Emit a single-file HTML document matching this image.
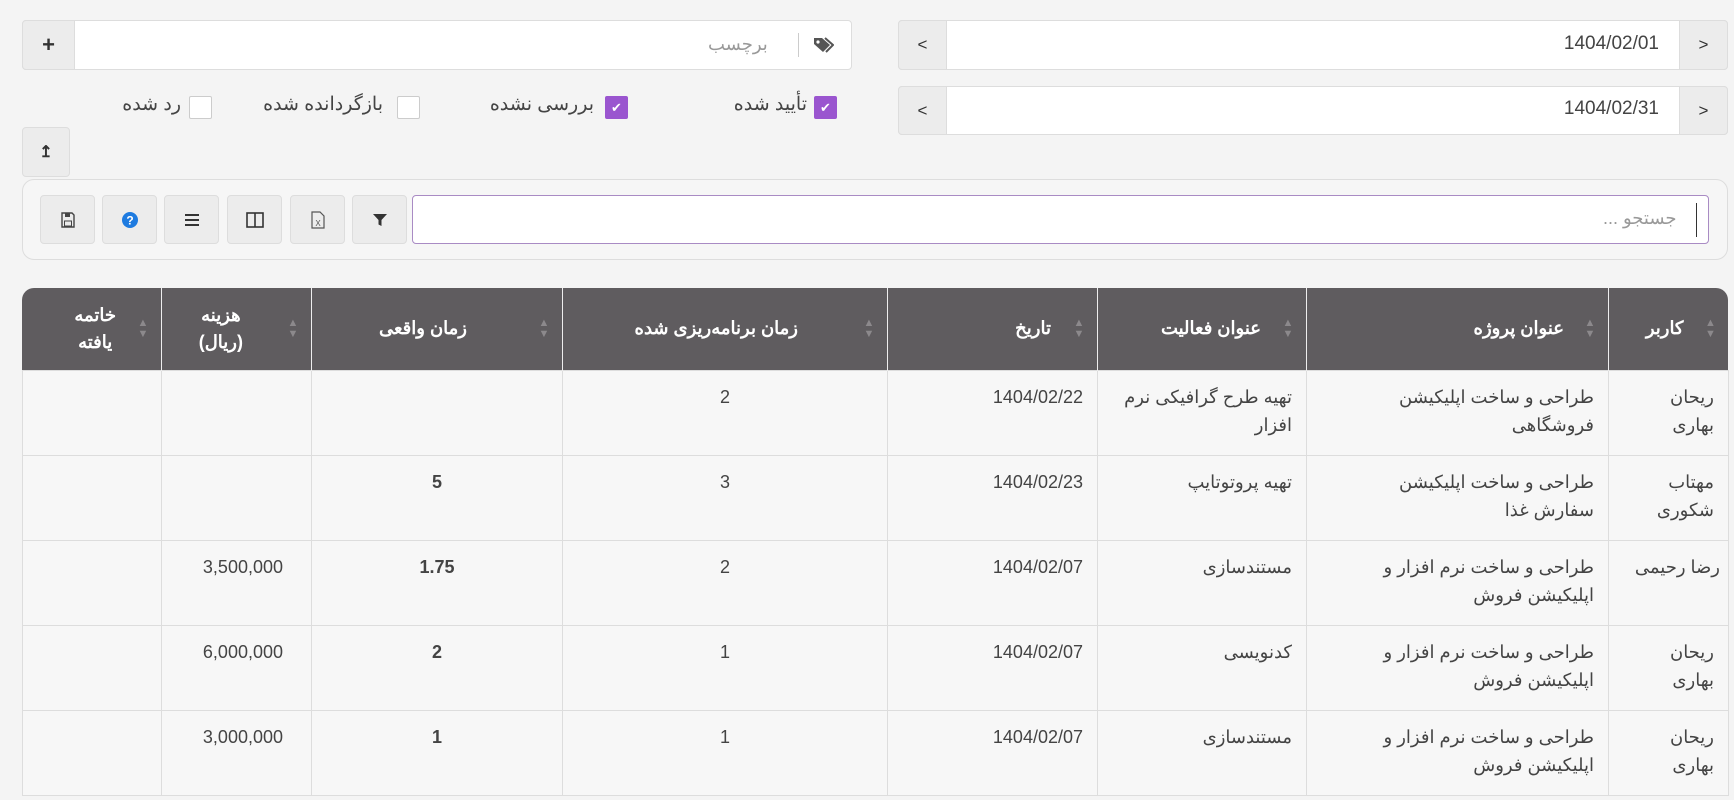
<!DOCTYPE html>
<html><head><meta charset="utf-8"><style>
*{box-sizing:border-box;margin:0;padding:0}
body{width:1734px;height:800px;overflow:hidden;background:#f4f4f4;font-family:"Liberation Sans","Noto Sans CJK SC",sans-serif;color:#444;position:relative}
.abs{position:absolute}
.box{position:absolute;background:#fff;border:1px solid #ddd;border-radius:4px}
.btn{position:absolute;background:#ececec;border:1px solid #ddd;display:flex;align-items:center;justify-content:center;color:#333;font-size:16px}
.cb{position:absolute;width:23px;height:23px;border:1px solid #ccc;background:#fff;border-radius:2px;top:96px}
.cb.on{background:#9a55cf;border-color:#9a55cf;color:#fff;font-size:13px;text-align:center;line-height:22px}
.lbl{position:absolute;top:93px;font-size:19px;color:#444;direction:rtl;white-space:nowrap}
table{position:absolute;left:22px;top:288px;width:1706px;border-collapse:collapse;direction:rtl;table-layout:fixed;font-size:18px}
th{background:#5f5c5f;color:#fff;height:82px;font-weight:bold;border-left:1px solid #eee;text-align:right;line-height:27px;font-size:18px;padding-left:4px}
th:last-child{border-left:none}
th .w{display:flex;flex-direction:row;align-items:center}
th .s{color:#8c898c;font-size:11px;line-height:11px;width:12px;flex:none;text-align:center}
td{border:1px solid #ddd;height:85px;vertical-align:top;padding:12px 14px;line-height:28px;color:#444;background:#f7f7f7;text-align:right}
.c{text-align:center}.b{font-weight:bold}.m{padding-right:28px}
.dt{position:absolute;right:75px;font-size:19px;color:#444}
</style></head><body>
<div class="box" style="left:22px;top:20px;width:830px;height:50px;border-radius:4px"></div>
<div class="btn" style="left:22px;top:20px;width:53px;height:50px;border-radius:4px 0 0 4px;font-weight:bold;font-size:22px">+</div>
<div class="abs" style="left:798px;top:33px;width:1px;height:24px;background:#ccc"></div>
<svg class="abs" style="left:812px;top:36px" width="22" height="18" viewBox="0 0 22 18"><path d="M2 2h8l8 7-7 7-9-8z" fill="#555"/><circle cx="6" cy="6" r="1.6" fill="#fff"/><path d="M13 2l8 7-7 7" fill="none" stroke="#555" stroke-width="2"/></svg>
<div class="abs" style="left:708px;top:34px;font-size:18px;color:#999;direction:rtl">برچسب</div>

<div class="box" style="left:898px;top:20px;width:830px;height:50px"></div>
<div class="btn" style="left:898px;top:20px;width:49px;height:50px;border-radius:4px 0 0 4px;font-size:17px">&#x3c;</div>
<div class="btn" style="left:1679px;top:20px;width:49px;height:50px;border-radius:0 4px 4px 0;font-size:17px">&#x3e;</div>
<div class="dt" style="top:33px">1404/02/01</div>
<div class="box" style="left:898px;top:86px;width:830px;height:49px"></div>
<div class="btn" style="left:898px;top:86px;width:49px;height:49px;border-radius:4px 0 0 4px;font-size:17px">&#x3c;</div>
<div class="btn" style="left:1679px;top:86px;width:49px;height:49px;border-radius:0 4px 4px 0;font-size:17px">&#x3e;</div>
<div class="dt" style="top:98px">1404/02/31</div>

<div class="cb on" style="left:814px">✔</div><div class="lbl" style="right:927px">تأیید شده</div>
<div class="cb on" style="left:605px">✔</div><div class="lbl" style="right:1140px">بررسی نشده</div>
<div class="cb" style="left:397px"></div><div class="lbl" style="right:1351px">بازگردانده شده</div>
<div class="cb" style="left:189px"></div><div class="lbl" style="right:1553px">رد شده</div>

<div class="btn" style="left:22px;top:127px;width:48px;height:50px;border-radius:4px;font-weight:bold">↥</div>

<div class="abs" style="left:22px;top:179px;width:1706px;height:81px;border:1px solid #ddd;border-radius:12px;background:#f6f6f6"></div>
<div class="box" style="left:412px;top:195px;width:1297px;height:49px;border-color:#a98bc4"></div>
<div class="abs" style="left:1603px;top:208px;font-size:18px;color:#999;direction:rtl">جستجو ...</div>
<div class="abs" style="left:1696px;top:203px;width:1px;height:34px;background:#333"></div>
<div class="btn" style="left:40px;top:195px;width:55px;height:49px;border-radius:4px"><svg width="14" height="16"><path d="M1 1h10l2 2v12H1z" fill="none" stroke="#444" stroke-width="1.4"/><rect x="4" y="1" width="5" height="4" fill="#444"/><rect x="3.5" y="9" width="7" height="5" fill="none" stroke="#444"/></svg></div>
<div class="btn" style="left:102px;top:195px;width:55px;height:49px;border-radius:4px"><svg width="16" height="16"><circle cx="8" cy="8" r="8" fill="#1e7be0"/><text x="8" y="12.5" font-size="12" font-weight="bold" fill="#fff" text-anchor="middle" font-family="Liberation Sans">?</text></svg></div>
<div class="btn" style="left:164px;top:195px;width:55px;height:49px;border-radius:4px"><svg width="16" height="14"><path d="M1 2h14M1 7h14M1 12h14" stroke="#333" stroke-width="2"/></svg></div>
<div class="btn" style="left:227px;top:195px;width:55px;height:49px;border-radius:4px"><svg width="18" height="16"><rect x="1" y="1" width="16" height="14" fill="none" stroke="#333" stroke-width="1.6"/><path d="M9 1v14" stroke="#333" stroke-width="1.6"/></svg></div>
<div class="btn" style="left:290px;top:195px;width:55px;height:49px;border-radius:4px"><svg width="14" height="18"><path d="M1 1h8l4 4v12H1z" fill="none" stroke="#555" stroke-width="1.2"/><text x="7" y="15" font-size="8" text-anchor="middle" fill="#555" font-family="Liberation Sans">X</text></svg></div>
<div class="btn" style="left:352px;top:195px;width:55px;height:49px;border-radius:4px"><svg width="14" height="14"><path d="M0 1h14L8.5 7v6l-3-1.5V7z" fill="#333"/></svg></div>

<div class="abs" style="left:22px;top:288px;width:1706px;height:82px;background:#5f5c5f;border-radius:12px 12px 0 0"></div>
<table>
<colgroup><col style="width:120px"><col style="width:302px"><col style="width:209px"><col style="width:210px"><col style="width:325px"><col style="width:251px"><col style="width:150px"><col style="width:139px"></colgroup>
<tr>
<th style="background:transparent;padding-right:12px"><div class="w"><span class="s">▲<br>▼</span><span style="margin-right:21px">کاربر</span></div></th>
<th style="padding-right:12px"><div class="w"><span class="s">▲<br>▼</span><span style="margin-right:20px">عنوان پروژه</span></div></th>
<th style="padding-right:12px"><div class="w"><span class="s">▲<br>▼</span><span style="margin-right:21px">عنوان فعالیت</span></div></th>
<th style="padding-right:12px"><div class="w"><span class="s">▲<br>▼</span><span style="margin-right:22px">تاریخ</span></div></th>
<th style="padding-right:12px"><div class="w"><span class="s">▲<br>▼</span><span style="margin-right:65px">زمان برنامه‌ریزی شده</span></div></th>
<th style="padding-right:12px"><div class="w"><span class="s">▲<br>▼</span><span style="margin-right:71px">زمان واقعی</span></div></th>
<th style="padding-right:12px"><div class="w"><span class="s">▲<br>▼</span><span style="margin-right:44px;text-align:center">هزینه<br>(ریال)</span></div></th>
<th style="background:transparent;padding-right:12px"><div class="w"><span class="s">▲<br>▼</span><span style="margin-right:21px;text-align:center">خاتمه<br>یافته</span></div></th>
</tr>
<tr><td>ریحان<br>بهاری</td><td>طراحی و ساخت اپلیکیشن<br>فروشگاهی</td><td>تهیه طرح گرافیکی نرم<br>افزار</td><td>1404/02/22</td><td class="c">2</td><td></td><td></td><td></td></tr>
<tr><td>مهتاب<br>شکوری</td><td>طراحی و ساخت اپلیکیشن<br>سفارش غذا</td><td>تهیه پروتوتایپ</td><td>1404/02/23</td><td class="c">3</td><td class="c b">5</td><td></td><td></td></tr>
<tr><td style="padding-right:8px">رضا رحیمی</td><td>طراحی و ساخت نرم افزار و<br>اپلیکیشن فروش</td><td>مستندسازی</td><td>1404/02/07</td><td class="c">2</td><td class="c b">1.75</td><td class="m">3,500,000</td><td></td></tr>
<tr><td>ریحان<br>بهاری</td><td>طراحی و ساخت نرم افزار و<br>اپلیکیشن فروش</td><td>کدنویسی</td><td>1404/02/07</td><td class="c">1</td><td class="c b">2</td><td class="m">6,000,000</td><td></td></tr>
<tr><td>ریحان<br>بهاری</td><td>طراحی و ساخت نرم افزار و<br>اپلیکیشن فروش</td><td>مستندسازی</td><td>1404/02/07</td><td class="c">1</td><td class="c b">1</td><td class="m">3,000,000</td><td></td></tr>
</table>
</body></html>
